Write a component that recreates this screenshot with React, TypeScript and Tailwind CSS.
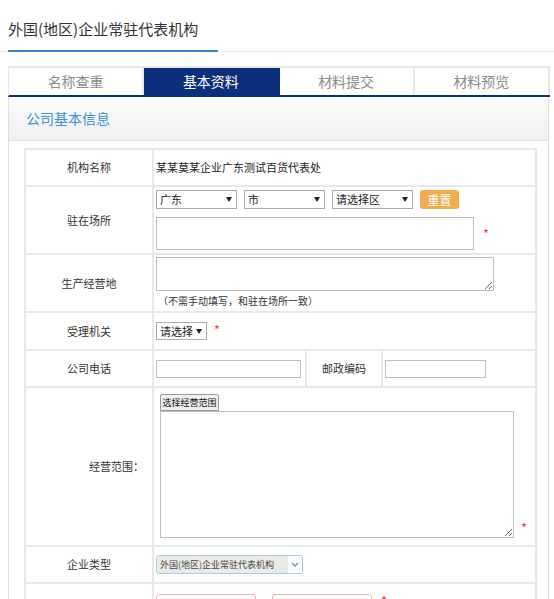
import React from "react";

function Arrow() {
  return (
    <svg width="6" height="5" viewBox="0 0 6 5" className="shrink-0">
      <path d="M0 0H6L3 5Z" fill="#222" />
    </svg>
  );
}

function Star({ className = "" }: { className?: string }) {
  return <span className={`text-[13px] leading-none text-[#ff3b3b] ${className}`}>*</span>;
}

export default function App() {
  const tabs = ["名称查重", "基本资料", "材料提交", "材料预览"];
  const label = "border-2 border-[#e8e8e8] text-center text-[11px] text-[#333] align-middle";
  const cell = "border-2 border-[#e8e8e8] pl-[2px] align-top text-[11px] text-[#222]";

  return (
    <div className="w-[554px] h-[599px] overflow-hidden bg-white font-['Noto_Sans_CJK_SC','Noto_Sans',sans-serif]">
      {/* page title */}
      <div className="h-[52px] border-b border-[#e6edf5]">
        <div className="ml-2 w-[210px] h-[52px] border-b-2 border-[#3b82c8] flex items-center pt-[9px] text-[15px] text-[#333]">
          外国(地区)企业常驻代表机构
        </div>
      </div>

      {/* steps */}
      <div className="ml-2 mt-[14px] w-[542px] flex border-t-2 border-l border-[#e8e8e8] border-b-2 border-b-[#0c2e7b]">
        {tabs.map((t, i) => (
          <div
            key={t}
            className={`flex-1 h-[27px] flex items-center justify-center text-[14px] border-r-2 border-[#e8e8e8] ${
              i === 1 ? "bg-[#0c2e7b] text-white border-r-[#0c2e7b]" : "bg-white text-[#8a8a8a]"
            }`}
          >
            {t}
          </div>
        ))}
      </div>

      {/* panel */}
      <div className="ml-2 w-[541px] h-[520px] border-x border-[#dcdcdc]">
        <div className="h-[44px] flex items-center pl-[17px] bg-gradient-to-b from-[#fbfbfb] to-[#f0f0f0] border-b border-[#e0e0e0] text-[14px] text-[#3d8fd8]">
          公司基本信息
        </div>

        <table className="ml-[15px] mt-[7px] w-[511px] table-fixed border-collapse">
          <colgroup>
            <col className="w-[128px]" />
            <col className="w-[153px]" />
            <col className="w-[76px]" />
            <col className="w-[154px]" />
          </colgroup>
          <tbody>
            <tr className="h-[37px]">
              <td className={label}>机构名称</td>
              <td colSpan={3} className={`${cell} !align-middle`}>
                某某莫某企业广东测试百货代表处
              </td>
            </tr>

            <tr className="h-[68px]">
              <td className={label}>驻在场所</td>
              <td colSpan={3} className={`${cell} pt-[3px]`}>
                <div className="flex items-center">
                  <div className="w-[81px] h-[19px] border border-[#a9a9a9] bg-white flex items-center justify-between pl-[3px] pr-[4px]">
                    <span>广东</span>
                    <Arrow />
                  </div>
                  <div className="ml-[7px] w-[81px] h-[19px] border border-[#a9a9a9] bg-white flex items-center justify-between pl-[3px] pr-[4px]">
                    <span>市</span>
                    <Arrow />
                  </div>
                  <div className="ml-[7px] w-[81px] h-[19px] border border-[#a9a9a9] bg-white flex items-center justify-between pl-[3px] pr-[4px]">
                    <span>请选择区</span>
                    <Arrow />
                  </div>
                  <button className="ml-[7px] w-[39px] h-[19px] rounded-[3px] bg-[#f0ad4e] text-white text-[12px] leading-none">
                    重置
                  </button>
                </div>
                <div className="flex items-center mt-[8px]">
                  <textarea
                    readOnly
                    className="block w-[318px] h-[33px] border border-[#bdbdbd] resize-none"
                  />
                  <Star className="ml-[9px]" />
                </div>
              </td>
            </tr>

            <tr className="h-[58px]">
              <td className={label}>生产经营地</td>
              <td colSpan={3} className={`${cell} pt-[2px]`}>
                <textarea readOnly className="block w-[338px] h-[34px] border border-[#bdbdbd]" />
                <div className="mt-[2px] pl-[2px] text-[10px] text-[#333]">（不需手动填写，和驻在场所一致）</div>
              </td>
            </tr>

            <tr className="h-[38px]">
              <td className={label}>受理机关</td>
              <td colSpan={3} className={`${cell} pt-[9px]`}>
                <div className="flex items-start">
                  <div className="w-[51px] h-[18px] border border-[#a9a9a9] bg-white flex items-center justify-between pl-[3px] pr-[4px] text-[11px]">
                    <span>请选择</span>
                    <Arrow />
                  </div>
                  <Star className="ml-[7px] mt-[1px]" />
                </div>
              </td>
            </tr>

            <tr className="h-[37px]">
              <td className={label}>公司电话</td>
              <td className={`${cell} !align-middle`}>
                <div className="w-[145px] h-[18px] border border-[#bdbdbd]" />
              </td>
              <td className={label}>邮政编码</td>
              <td className={`${cell} !align-middle`}>
                <div className="w-[101px] h-[18px] border border-[#bdbdbd]" />
              </td>
            </tr>

            <tr className="h-[159px]">
              <td className={`${label} !text-right pr-[8px]`}>经营范围：</td>
              <td colSpan={3} className={`${cell} pl-[6px] pt-[6px]`}>
                <button className="block h-[17px] w-[59px] bg-[#efefef] border border-[#9a9a9a] rounded-t-[2px] text-[9px] leading-none text-[#111] whitespace-nowrap">
                  选择经营范围
                </button>
                <div className="flex items-end">
                  <textarea readOnly className="block w-[354px] h-[127px] border border-[#bdbdbd]" />
                  <Star className="ml-[7px] mb-[4px]" />
                </div>
              </td>
            </tr>

            <tr className="h-[37px]">
              <td className={label}>企业类型</td>
              <td colSpan={3} className={`${cell} !align-middle`}>
                <div className="w-[147px] h-[19px] rounded-[3px] border border-[#a8c8ee] flex overflow-hidden">
                  <div className="flex-1 bg-[#ebebe5] flex items-center pl-[3px] text-[9px] text-[#444] whitespace-nowrap overflow-hidden">
                    外国(地区)企业常驻代表机构
                  </div>
                  <div className="w-[14px] bg-white flex items-center justify-center">
                    <svg width="8" height="5" viewBox="0 0 8 5">
                      <path d="M1 1L4 4L7 1" fill="none" stroke="#5a9be0" strokeWidth="1.5" />
                    </svg>
                  </div>
                </div>
              </td>
            </tr>

            <tr className="h-[37px]">
              <td className={label}></td>
              <td colSpan={3} className={`${cell} pt-[10px]`}>
                <div className="flex items-start">
                  <div className="w-[100px] h-[19px] rounded-[3px] border border-[#f6b3b3]" />
                  <div className="ml-[16px] w-[100px] h-[19px] rounded-[3px] border border-[#f6b3b3]" />
                  <Star className="ml-[9px]" />
                </div>
              </td>
            </tr>
          </tbody>
        </table>
      </div>
    </div>
  );
}
